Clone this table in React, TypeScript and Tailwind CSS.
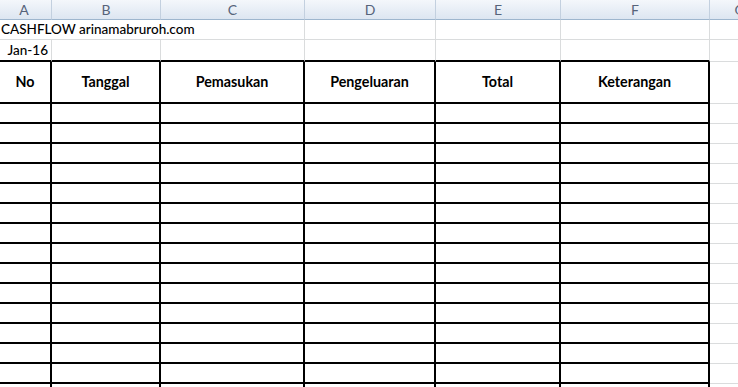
const columns = [
  { key: 'A', width: 'w-[55px]' },
  { key: 'B', width: 'w-[109px]' },
  { key: 'C', width: 'w-[144px]' },
  { key: 'D', width: 'w-[131px]' },
  { key: 'E', width: 'w-[125px]' },
  { key: 'F', width: 'w-[149px]' },
  { key: 'G', width: 'w-[60px]' },
];

const headings = ['No', 'Tanggal', 'Pemasukan', 'Pengeluaran', 'Total', 'Keterangan'];

const emptyRows = Array.from({ length: 15 }, (_, i) => i);

const App = () => {
  return (
    <div className="h-[387px] w-[738px] overflow-hidden bg-white font-['Lato','Liberation_Sans',sans-serif] text-[13.5px] text-black">
      <div className="ml-[-3px] w-max">
        {/* column letters */}
        <div className="flex h-[20px]">
          {columns.map((col) => (
            <div
              key={col.key}
              className={`${col.width} flex h-full shrink-0 items-center justify-center border-r border-b border-r-[#c3d0df] border-b-[#9eb6ce] bg-gradient-to-b from-[#f4f7fb] to-[#dde6f1] text-[14px] text-[#56637a]`}
            >
              {col.key}
            </div>
          ))}
        </div>

        {/* title row */}
        <div className="flex h-[20px]">
          <div className="flex h-full w-[308px] shrink-0 items-end border-r border-b border-[#dadcdd] pl-[4px] font-medium leading-[19px]">
            CASHFLOW arinamabruroh.com
          </div>
          <div className="h-full w-[131px] shrink-0 border-r border-b border-[#dadcdd]" />
          <div className="h-full w-[125px] shrink-0 border-r border-b border-[#dadcdd]" />
          <div className="h-full w-[149px] shrink-0 border-r border-b border-[#dadcdd]" />
          <div className="h-full w-[60px] shrink-0 border-r border-b border-[#dadcdd]" />
        </div>

        {/* date row */}
        <div className="flex h-[22px]">
          {columns.map((col) => (
            <div
              key={col.key}
              className={`${col.width} flex h-full shrink-0 items-end justify-end pr-[3px] font-medium leading-[20px] ${
                col.key === 'G' ? 'border-r border-b border-[#dadcdd]' : 'border-r border-b-2 border-r-[#dadcdd] border-b-black'
              }`}
            >
              {col.key === 'A' ? 'Jan-16' : ''}
            </div>
          ))}
        </div>

        {/* table heading */}
        <div className="flex h-[42px]">
          {columns.map((col, i) => (
            <div
              key={col.key}
              className={`${col.width} flex h-full shrink-0 items-center justify-center text-[14.3px] font-bold ${
                col.key === 'G' ? 'border-r border-b border-[#dadcdd]' : 'border-r-2 border-b-2 border-black'
              } ${col.key === 'A' ? 'pl-[3px]' : ''}`}
            >
              {headings[i] ?? ''}
            </div>
          ))}
        </div>

        {/* empty rows */}
        {emptyRows.map((row) => (
          <div key={row} className="flex h-[20px]">
            {columns.map((col) => (
              <div
                key={col.key}
                className={`${col.width} h-full shrink-0 ${
                  col.key === 'G' ? 'border-r border-b border-[#dadcdd]' : 'border-r-2 border-b-2 border-black'
                }`}
              />
            ))}
          </div>
        ))}
      </div>
    </div>
  );
};

export default App;
